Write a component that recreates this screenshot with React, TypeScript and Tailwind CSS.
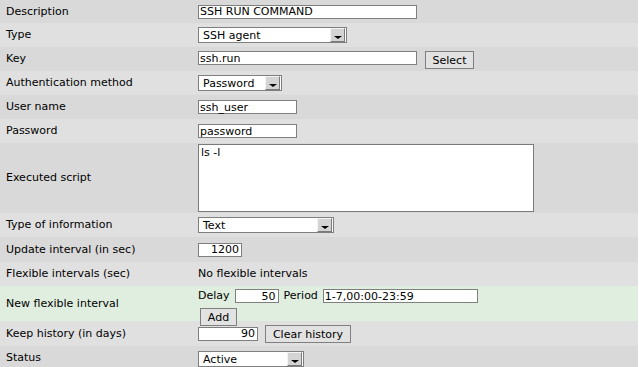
import React from "react";

const font = { fontFamily: '"DejaVu Sans", Verdana, sans-serif' };

function Row({ label, bg, h, children, align = "items-center", pt = "" }: { label: string; bg: string; h: string; children?: React.ReactNode; align?: string; pt?: string }) {
  return (
    <div className={`flex ${bg} ${h}`}>
      <div className="w-[192px] pl-[6px] pt-[1px] flex items-center text-black">{label}</div>
      <div className={`flex-1 pl-[6px] flex ${align} ${pt}`}>{children}</div>
    </div>
  );
}

function Input({ w, value, right = false }: { w: string; value: string; right?: boolean }) {
  return (
    <div className={`${w} h-[14px] bg-white border border-[#7f7f7f] flex items-center leading-none ${right ? "justify-end pr-[2px]" : "pl-[1px]"}`}>
      <span>{value}</span>
    </div>
  );
}

function Select({ w, value }: { w: string; value: string }) {
  return (
    <div className={`${w} h-[16px] bg-white border border-[#7f7f7f] flex items-center justify-between leading-none`}>
      <span className="pl-[4px] pt-[1px]">{value}</span>
      <div className="w-[15px] h-[14px] bg-[#d4d4d4] border border-t-[#f4f4f4] border-l-[#f4f4f4] border-r-[#7a7a7a] border-b-[#7a7a7a] flex items-end justify-center pb-[2px] mr-[1px]">
        <div className="w-0 h-0 border-l-[4px] border-r-[4px] border-t-[3px] border-l-transparent border-r-transparent border-t-black" />
      </div>
    </div>
  );
}

function Button({ w, label }: { w: string; label: string }) {
  return (
    <div className={`${w} h-[18px] bg-[#e2e2e2] border border-[#7f7f7f] flex items-center justify-center leading-none pt-[1px]`}>
      {label}
    </div>
  );
}

export default function App() {
  const dark = "bg-[#d9d9d9]";
  const light = "bg-[#e0e0e0]";
  return (
    <div className="w-[639px] h-[367px] bg-white overflow-hidden text-[11px] text-black" style={font}>
      <div className="w-[638px]">
        <Row label="Description" bg={dark} h="h-[23px]">
          <Input w="w-[219px]" value="SSH RUN COMMAND" />
        </Row>
        <Row label="Type" bg={light} h="h-[24px]">
          <Select w="w-[149px]" value="SSH agent" />
        </Row>
        <Row label="Key" bg={dark} h="h-[24px]" align="items-start" pt="pt-[4px]">
          <Input w="w-[219px]" value="ssh.run" />
          <div className="ml-[8px]">
            <Button w="w-[49px]" label="Select" />
          </div>
        </Row>
        <Row label="Authentication method" bg={light} h="h-[24px]">
          <Select w="w-[84px]" value="Password" />
        </Row>
        <Row label="User name" bg={dark} h="h-[24px]">
          <Input w="w-[99px]" value="ssh_user" />
        </Row>
        <Row label="Password" bg={light} h="h-[24px]">
          <Input w="w-[99px]" value="password" />
        </Row>
        <Row label="Executed script" bg={dark} h="h-[70px]" align="items-start" pt="pt-[1px]">
          <div className="w-[336px] h-[68px] bg-white border-[1.5px] border-[#7a7a7a] pl-[2px] pt-[1px] leading-[13px]">
            ls -l
          </div>
        </Row>
        <Row label="Type of information" bg={light} h="h-[24px]">
          <Select w="w-[136px]" value="Text" />
        </Row>
        <Row label="Update interval (in sec)" bg={dark} h="h-[25px]">
          <Input w="w-[44px]" value="1200" right />
        </Row>
        <Row label="Flexible intervals (sec)" bg={light} h="h-[24px]">
          <span className="pt-[1px]">No flexible intervals</span>
        </Row>
        <div className="flex bg-[#dfeedf] h-[35px]">
          <div className="w-[192px] pl-[6px] pt-[1px] flex items-center">New flexible interval</div>
          <div className="flex-1 pl-[6px] pt-[2px] flex flex-col gap-[3px]">
            <div className="flex items-center">
              <span>Delay</span>
              <div className="ml-[5px]">
                <Input w="w-[44px]" value="50" right />
              </div>
              <span className="ml-[5px]">Period</span>
              <div className="ml-[5px]">
                <Input w="w-[155px]" value="1-7,00:00-23:59" />
              </div>
            </div>
            <div className="pl-[2px]">
              <Button w="w-[37px]" label="Add" />
            </div>
          </div>
        </div>
        <Row label="Keep history (in days)" bg={light} h="h-[25px]">
          <Input w="w-[60px]" value="90" right />
          <div className="ml-[7px]">
            <Button w="w-[86px]" label="Clear history" />
          </div>
        </Row>
        <Row label="Status" bg={dark} h="h-[24px]" align="items-start" pt="pt-[5px]">
          <Select w="w-[106px]" value="Active" />
        </Row>
      </div>
    </div>
  );
}
